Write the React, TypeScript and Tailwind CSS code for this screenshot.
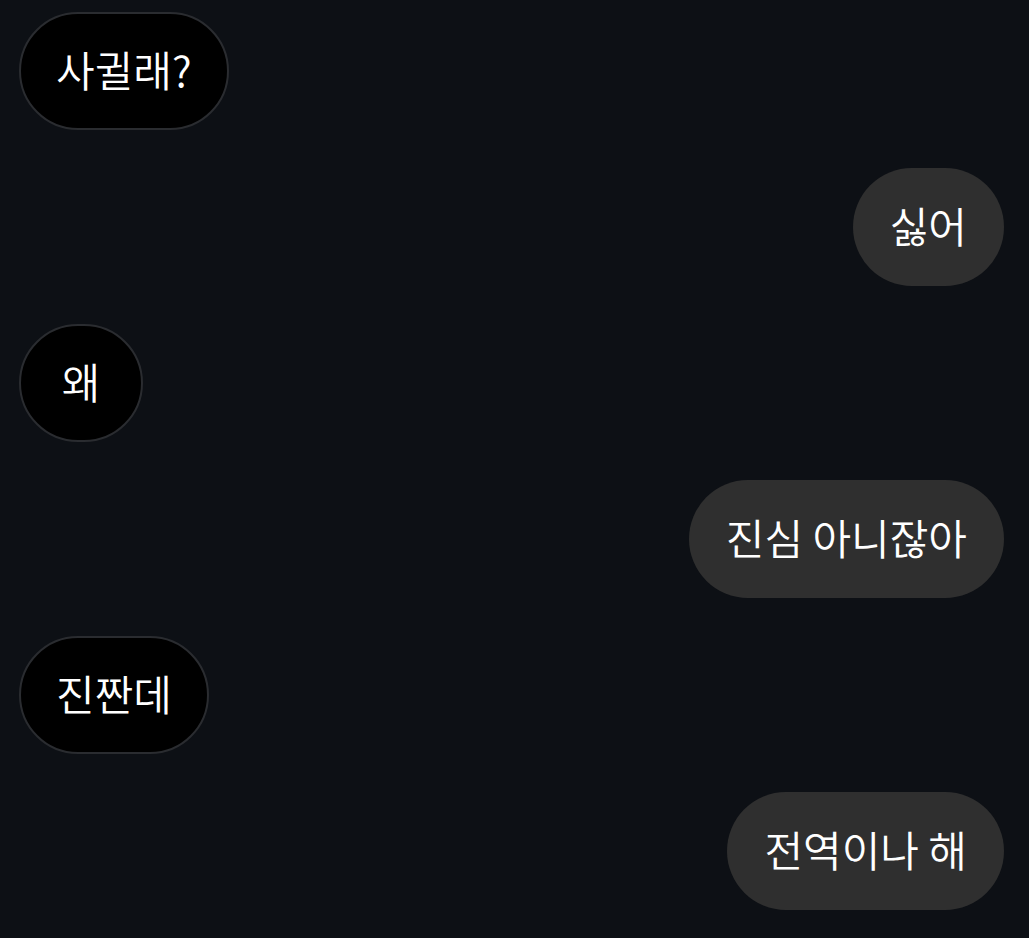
import React from 'react';

interface Message {
  text: string;
  mine: boolean;
}

const messages: Message[] = [
  { text: '사귈래?', mine: false },
  { text: '싫어', mine: true },
  { text: '왜', mine: false },
  { text: '진심 아니잖아', mine: true },
  { text: '진짠데', mine: false },
  { text: '전역이나 해', mine: true },
];

const Bubble: React.FC<Message> = ({ text, mine }) => {
  if (mine) {
    return (
      <div className="self-end h-[118px] min-w-[124px] px-[37px] rounded-full bg-[#2f2f2f] flex items-center justify-center">
        <span className="text-[42px] leading-none font-[350] text-white whitespace-nowrap -mt-1">{text}</span>
      </div>
    );
  }
  return (
    <div className="self-start h-[118px] min-w-[124px] px-[35px] rounded-full bg-black border-2 border-[#2a2c30] flex items-center justify-center">
      <span className="text-[42px] leading-none font-[350] text-white whitespace-nowrap -mt-1">{text}</span>
    </div>
  );
};

export default function App() {
  return (
    <div
      className="w-[1029px] h-[938px] bg-[#0d1015] overflow-hidden flex flex-col gap-[38px] pt-[12px] pl-[19px] pr-[25px]"
      style={{ fontFamily: '"Noto Sans CJK KR", "Noto Sans", sans-serif' }}
    >
      {messages.map((m, i) => (
        <Bubble key={i} text={m.text} mine={m.mine} />
      ))}
    </div>
  );
}
